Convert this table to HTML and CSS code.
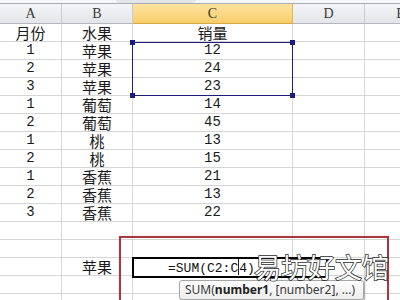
FILE: index.html
```html
<!DOCTYPE html>
<html>
<head>
<meta charset="utf-8">
<link rel="stylesheet" href="styles.css">
</head>
<body>
<div class="top"><div class="fx-tab"></div></div>
<div class="sheet">
  <div class="row head">
    <div class="c">A</div><div class="c">B</div><div class="c hl">C</div><div class="c">D</div><div class="c">E</div>
  </div>
  <div class="row"><div class="c zh">月份</div><div class="c zh">水果</div><div class="c zh">销量</div><div class="c"></div><div class="c"></div></div>
  <div class="row"><div class="c">1</div><div class="c zh">苹果</div><div class="c">12</div><div class="c"></div><div class="c"></div></div>
  <div class="row"><div class="c">2</div><div class="c zh">苹果</div><div class="c">24</div><div class="c"></div><div class="c"></div></div>
  <div class="row"><div class="c">3</div><div class="c zh">苹果</div><div class="c">23</div><div class="c"></div><div class="c"></div></div>
  <div class="row"><div class="c">1</div><div class="c zh">葡萄</div><div class="c">14</div><div class="c"></div><div class="c"></div></div>
  <div class="row"><div class="c">2</div><div class="c zh">葡萄</div><div class="c">45</div><div class="c"></div><div class="c"></div></div>
  <div class="row"><div class="c">1</div><div class="c zh">桃</div><div class="c">13</div><div class="c"></div><div class="c"></div></div>
  <div class="row"><div class="c">2</div><div class="c zh">桃</div><div class="c">15</div><div class="c"></div><div class="c"></div></div>
  <div class="row"><div class="c">1</div><div class="c zh">香蕉</div><div class="c">21</div><div class="c"></div><div class="c"></div></div>
  <div class="row"><div class="c">2</div><div class="c zh">香蕉</div><div class="c">13</div><div class="c"></div><div class="c"></div></div>
  <div class="row"><div class="c">3</div><div class="c zh">香蕉</div><div class="c">22</div><div class="c"></div><div class="c"></div></div>
  <div class="row"><div class="c"></div><div class="c"></div><div class="c"></div><div class="c"></div><div class="c"></div></div>
  <div class="row"><div class="c"></div><div class="c"></div><div class="c"></div><div class="c"></div><div class="c"></div></div>
  <div class="row"><div class="c"></div><div class="c zh">苹果</div><div class="c"></div><div class="c"></div><div class="c"></div></div>
  <div class="row"><div class="c"></div><div class="c"></div><div class="c"></div><div class="c"></div><div class="c"></div></div>
  <div class="row"><div class="c"></div><div class="c"></div><div class="c"></div><div class="c"></div><div class="c"></div></div>

  <div class="selection">
    <span class="hd tl"></span><span class="hd tr"></span><span class="hd bl"></span><span class="hd br"></span>
  </div>
  <div class="redbox"></div>
  <div class="editor">=SUM(C2:C<span class="caret"></span>4)</div>
  <div class="tip">SUM(<b>number1</b>, [number2], ...)</div>
  <div class="mark">易坊好文馆</div>
</div>
</body>
</html>
```
FILE: styles.css
```css
html, body {
  margin: 0;
  padding: 0;
  width: 400px;
  height: 300px;
  overflow: hidden;
  background: #fff;
}
.top {
  height: 3px;
  background: #f4f6f8;
  border-bottom: 1px solid #a9acb0;
  position: relative;
}
.fx-tab {
  position: absolute;
  left: 116px;
  top: 0;
  width: 80px;
  height: 3px;
  background: #e3e5e8;
  border-radius: 0 0 3px 3px;
}
.sheet {
  position: relative;
  width: 400px;
  overflow: hidden;
}
.row {
  display: grid;
  grid-template-columns: 62px 71px 160px 72px 72px;
  height: 18px;
}
.c {
  box-sizing: border-box;
  border-right: 1px solid #d6d6d6;
  border-bottom: 1px solid #d6d6d6;
  text-align: center;
  font-family: "Liberation Mono", monospace;
  font-size: 14px;
  line-height: 17px;
  color: #1a1a1a;
  white-space: nowrap;
}
.zh {
  font-family: "Noto Sans CJK SC", sans-serif;
  font-size: 15px;
  line-height: 17px;
}
.head {
  height: 20px;
}
.head .c {
  background: linear-gradient(#f3f5f7, #e2e5e9);
  border-right: 1px solid #c8ccd2;
  border-bottom: 1px solid #b4b8be;
  font-family: "Liberation Serif", serif;
  font-size: 14px;
  line-height: 19px;
  color: #3a3a3a;
}
.head .hl {
  background: linear-gradient(#fde3a0, #f7cd6a);
  border-right-color: #e1b452;
  border-bottom-color: #d9a84a;
}
.selection {
  position: absolute;
  left: 132px;
  top: 38px;
  width: 159px;
  height: 52px;
  border: 1.5px solid #1c1c78;
}
.hd {
  position: absolute;
  width: 5px;
  height: 5px;
  background: #1c1c80;
}
.tl { left: -3px; top: -3px; }
.tr { right: -3px; top: -3px; }
.bl { left: -3px; bottom: -3px; }
.br { right: -3px; bottom: -3px; }
.redbox {
  position: absolute;
  left: 119px;
  top: 232px;
  width: 266px;
  height: 90px;
  border: 2px solid #a63841;
  box-shadow: 0 0 1px #e7a9ad;
}
.editor {
  position: absolute;
  left: 132px;
  top: 253px;
  width: 158px;
  height: 17px;
  border: 2px solid #000;
  background: #fff;
  padding-left: 34px;
  box-sizing: content-box;
  font-family: "Liberation Mono", monospace;
  font-size: 13px;
  line-height: 17px;
  color: #111;
  white-space: nowrap;
}
.caret {
  display: inline-block;
  width: 1px;
  height: 16px;
  background: #222;
  vertical-align: -3px;
}
.tip {
  position: absolute;
  left: 179px;
  top: 276px;
  width: 178px;
  height: 18px;
  padding-left: 5px;
  border: 1px solid #a6a6a6;
  border-radius: 3px;
  background: linear-gradient(#fdfdfd, #ededed);
  box-shadow: 1px 1px 2px rgba(0, 0, 0, 0.25);
  font-family: "Noto Sans", sans-serif;
  font-size: 12px;
  line-height: 18px;
  color: #3a3a3a;
  white-space: nowrap;
}
.tip b {
  color: #222;
}
.mark {
  position: absolute;
  left: 254px;
  top: 248px;
  font-family: "Noto Sans CJK SC", sans-serif;
  font-size: 27px;
  line-height: 30px;
  color: #fff;
  -webkit-text-stroke: 1.5px #2a2a2a;
  paint-order: stroke fill;
  white-space: nowrap;
}
```
